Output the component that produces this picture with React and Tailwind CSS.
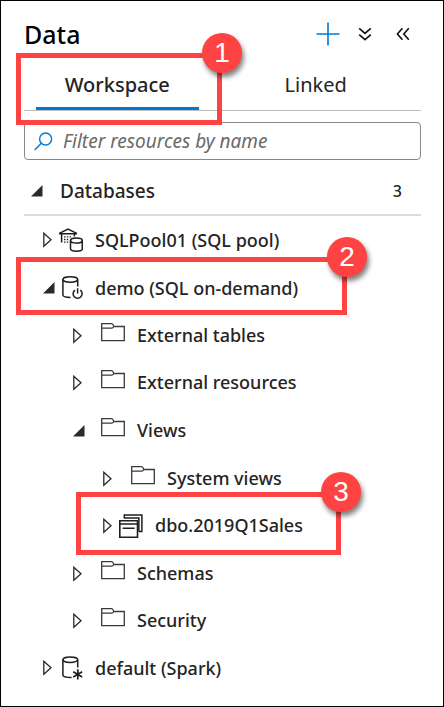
import React from "react";

function OpenCaret() {
  return (
    <svg width="12" height="12" viewBox="0 0 12 12" aria-hidden="true">
      <path d="M0 11.5H11.5V0Z" fill="#2b2a29" />
    </svg>
  );
}

function ClosedCaret() {
  return (
    <svg width="9" height="16" viewBox="0 0 9 16" aria-hidden="true">
      <path d="M0.8 1.2V14.2L8 7.7Z" fill="none" stroke="#2b2a29" strokeWidth="1.3" />
    </svg>
  );
}

function Svg({ children }) {
  return (
    <svg
      width="24"
      height="24"
      viewBox="0 0 24 24"
      fill="none"
      stroke="#1f1e1d"
      strokeWidth="1.5"
      aria-hidden="true"
    >
      {children}
    </svg>
  );
}

function FolderIcon() {
  return (
    <svg width="24" height="26" viewBox="0 0 24 26" fill="none" stroke="#3b3a39" strokeWidth="1.3" aria-hidden="true">
      <path d="M0.7 17.6V0.7H10.6Q11.8 0.7 12.8 3.5H23.3V17.6ZM0.7 5.2H10.6Q12 5.2 12.8 3.5" />
    </svg>
  );
}

function PoolIcon() {
  return (
    <Svg>
      <path d="M0.8 5.2L9 1L17.3 5.2V5.7H0.8ZM2.6 5.7V14.6M15.4 5.7V8.4" />
      <path
        d="M5 8.9H6.4M7.8 8.9H9.2M10.6 8.9H12M5 11.5H6.4M7.8 11.5H9.2M5 14.1H6.4M7.8 14.1H9.2"
        strokeWidth="1.4"
      />
      <ellipse cx="17.4" cy="12.6" rx="5.9" ry="2.5" />
      <path d="M11.5 12.6V20.8C11.5 22.2 14.1 23.2 17.4 23.2S23.3 22.2 23.3 20.8V12.6" />
    </Svg>
  );
}

function OnDemandIcon() {
  return (
    <Svg>
      <ellipse cx="11.3" cy="3.5" rx="7.4" ry="2.7" />
      <path d="M3.9 3.5V19C3.9 20.6 7 21.4 11.6 21.6M18.7 3.5V10.6" />
      <path d="M15.9 14.1A4.5 4.5 0 1 0 21.3 14.1M18.6 12.2V17.6" strokeWidth="1.5" />
    </Svg>
  );
}

function SparkIcon() {
  return (
    <Svg>
      <ellipse cx="11.3" cy="3.7" rx="7.4" ry="2.7" />
      <path d="M3.9 3.7V19C3.9 20.6 7 21.5 12.6 21.5M18.7 3.7V11.4" />
      <path d="M18.8 13.2V23.4M14.2 15.7L23.2 20.9M23.2 15.7L14.2 20.9" strokeWidth="1.7" />
    </Svg>
  );
}

function ViewIcon() {
  return (
    <Svg>
      <path d="M5.3 4.6V1H22.9V17.5H19.6M5.3 4H19.9V17.5" strokeWidth="1.5" />
      <path d="M0.8 6.8H18.5V23.2H0.8ZM0.8 10H18.5M3.6 14.2H15.6" strokeWidth="1.6" />
    </Svg>
  );
}

function Row({ icon, label, open = false, top = false, folder = false }) {
  return (
    <div className={`flex items-center ${top ? "h-12" : "h-[47px]"}`}>
      <button
        type="button"
        aria-label={`${open ? "Collapse" : "Expand"} ${label}`}
        aria-expanded={open}
        className={`flex shrink-0 items-center ${folder ? "w-7" : "w-4"}`}
      >
        {open ? <OpenCaret /> : <ClosedCaret />}
      </button>
      <span className="mr-3 shrink-0">{icon}</span>
      <span className="whitespace-nowrap">{label}</span>
    </div>
  );
}

function Callout({ number, className }) {
  return (
    <div className={`pointer-events-none absolute border-[5px] border-[#ff4343] ${className}`}>
      <span className="absolute -top-[25px] -right-[25px] flex size-10 items-center justify-center rounded-full bg-[#ff4343] font-['Liberation_Sans',sans-serif] text-[28px] leading-none text-white shadow-[2px_4px_5px_rgba(0,0,0,0.5)]">
        {number}
      </span>
    </div>
  );
}

export default function App() {
  return (
    <div className="relative border border-black bg-white pr-[22px] pb-[14px] pl-[23px] font-['Noto_Sans',sans-serif] text-[18px] font-medium text-[#252423]">
      <header className="flex h-[63px] items-center justify-between pt-[3px] pr-[11px]">
        <h1 className="pt-px text-[25px] font-medium text-black">Data</h1>
        <div className="flex items-center gap-[18px]">
          <button type="button" aria-label="Add new resource">
            <svg width="24" height="24" viewBox="0 0 24 24" stroke="#0078d4" strokeWidth="1.6" aria-hidden="true">
              <path d="M0.5 12H23.5M12 0.5V23.5" />
            </svg>
          </button>
          <button type="button" aria-label="Expand all" className="pr-[6px]">
            <svg width="14" height="14" viewBox="0 0 14 14" fill="none" stroke="#111" strokeWidth="1.6" aria-hidden="true">
              <path d="M1.2 1.4L7 6.4L12.8 1.4M1.2 7.6L7 12.6L12.8 7.6" />
            </svg>
          </button>
          <button type="button" aria-label="Collapse panel">
            <svg width="14" height="14" viewBox="0 0 14 14" fill="none" stroke="#111" strokeWidth="1.6" aria-hidden="true">
              <path d="M6.4 1.2L1.4 7L6.4 12.8M12.8 1.2L7.8 7L12.8 12.8" />
            </svg>
          </button>
        </div>
      </header>

      <div role="tablist" className="grid grid-cols-2 gap-9 border-b border-[#bdbdbd] pr-6 pl-3 text-[20px]">
        <button type="button" role="tab" aria-selected="true" className="h-[46px] border-b-[3px] border-[#0078d4] pb-[2px]">
          Workspace
        </button>
        <button type="button" role="tab" aria-selected="false" className="h-[46px] border-b-[3px] border-transparent pb-[2px] font-normal">
          Linked
        </button>
      </div>

      <label className="mt-[11px] flex h-[38px] items-center gap-[10px] rounded-sm border border-[#8a8886] pr-2 pl-[9px]">
        <svg width="19" height="19" viewBox="0 0 19 19" fill="none" stroke="#0078d4" strokeWidth="1.4" aria-hidden="true">
          <circle cx="11.6" cy="7" r="6" />
          <path d="M7.3 11.3L0.6 18" />
        </svg>
        <input
          type="text"
          aria-label="Filter resources by name"
          placeholder="Filter resources by name"
          className="min-w-0 flex-1 bg-transparent pt-px text-[19px] font-normal italic outline-none placeholder:text-[#6b6a69]"
        />
      </label>

      <section>
        <div className="mt-2 flex h-12 items-center border-b-2 border-[#dcdcdc] pr-[19px] pl-[7px]">
          <button type="button" aria-expanded="true" className="flex items-center gap-[17px] text-[19px]">
            <OpenCaret />
            Databases
          </button>
          <span className="ml-auto text-[16px]">3</span>
        </div>
        <ul className="pl-[19px]">
          <li>
            <Row top icon={<PoolIcon />} label="SQLPool01 (SQL pool)" />
          </li>
          <li>
            <Row top open icon={<OnDemandIcon />} label="demo (SQL on-demand)" />
            <ul className="pl-[30px]">
              <li>
                <Row folder icon={<FolderIcon />} label="External tables" />
              </li>
              <li>
                <Row folder icon={<FolderIcon />} label="External resources" />
              </li>
              <li className="pt-px">
                <Row folder open icon={<FolderIcon />} label="Views" />
                <ul className="py-px pl-[30px]">
                  <li>
                    <Row folder icon={<FolderIcon />} label="System views" />
                  </li>
                  <li>
                    <Row icon={<ViewIcon />} label="dbo.2019Q1Sales" />
                  </li>
                </ul>
              </li>
              <li>
                <Row folder icon={<FolderIcon />} label="Schemas" />
              </li>
              <li>
                <Row folder icon={<FolderIcon />} label="Security" />
              </li>
            </ul>
          </li>
          <li>
            <Row top icon={<SparkIcon />} label="default (Spark)" />
          </li>
        </ul>
      </section>

      <Callout number="1" className="top-[52px] left-[15px] h-[72px] w-[206px]" />
      <Callout number="2" className="top-[256px] left-[15px] h-[58px] w-[331px]" />
      <Callout number="3" className="top-[491px] left-[75px] h-[63px] w-[265px]" />
    </div>
  );
}
